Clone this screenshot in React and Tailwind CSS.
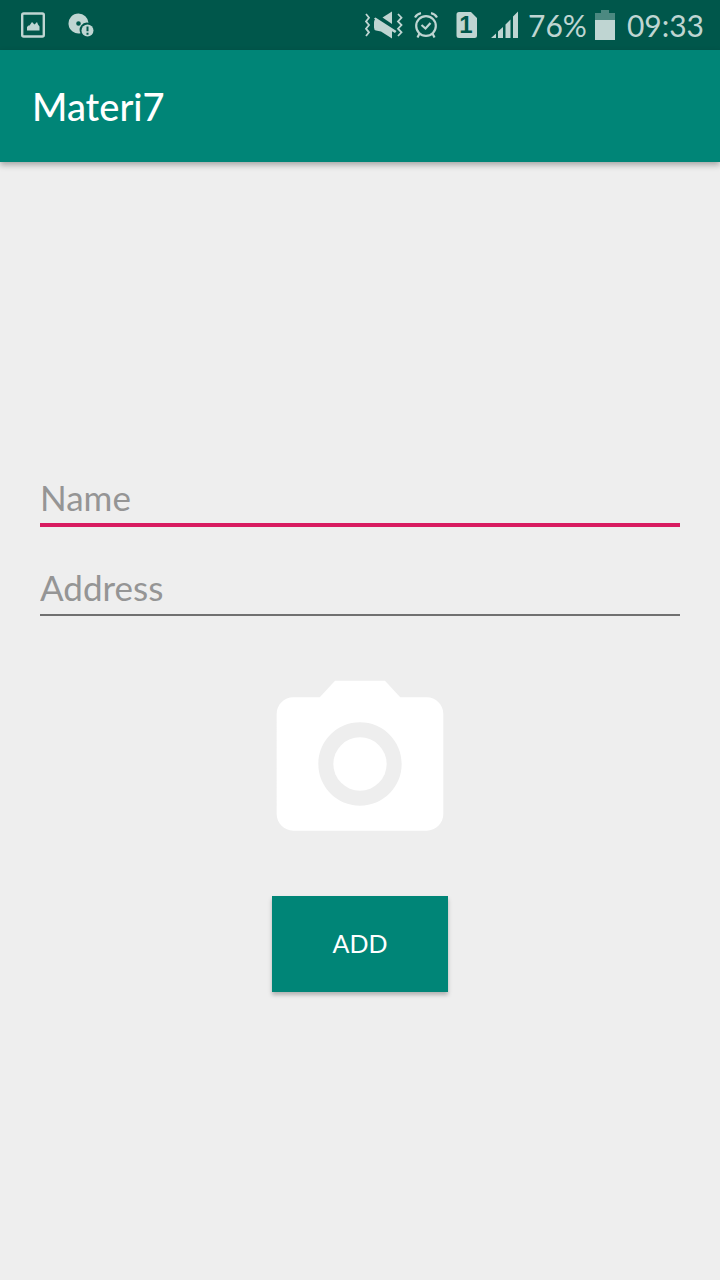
import React from 'react';

function PictureIcon() {
  return (
    <svg className="h-[26px] w-[26px]" viewBox="0 0 26 26" fill="none" aria-hidden="true">
      <rect x="2.200" y="1.500" width="21.600" height="23" rx="1.5" stroke="currentColor" strokeWidth="2.4" />
      <path d="M7 18.500V15l1.500-1.500h1L12 10l2.500 2.500L17 10l1 2.500 1.500 2v4z" fill="currentColor" />
    </svg>
  );
}

function DiscAlertIcon() {
  return (
    <svg className="h-6 w-7" viewBox="0 0 28 24" aria-hidden="true">
      <path
        fill="currentColor"
        fillRule="evenodd"
        d="M10.500 0.500a10 10 0 0 1 10 9.300a7.300 7.300 0 0 0-8 10.500a10 10 0 1 1-2-19.800zM10.500 8.200a2.300 2.300 0 1 0 0 4.600a2.300 2.300 0 0 0 0-4.600z"
      />
      <circle cx="19.5" cy="17.500" r="6" fill="currentColor" />
      <path d="M19.500 13.500v4.700M19.500 19.800v1.900" stroke="#00574b" strokeWidth="2" />
    </svg>
  );
}

function VibrateMuteIcon() {
  return (
    <svg className="h-7 w-10 overflow-visible" viewBox="0 0 40 28" aria-hidden="true">
      <path
        d="M4 3l3 3.700-3 3.700 3 3.600-3 3.700 3 3.600-3 3.700M36 3l3.500 3.700-3.500 3.700 3.500 3.600-3.500 3.700 3.500 3.600-3.500 3.700"
        fill="none"
        stroke="currentColor"
        strokeWidth="1.8"
      />
      <path d="M20.500 6.500L30 0.500v12.500z" fill="currentColor" />
      <path d="M13.500 6.500L34.500 20l-1.500 2-3-1.700V27.500L19 20.500l-5-1q-2-.5-2-3v-5q0-2 1-3l-1-1z" fill="currentColor" />
    </svg>
  );
}

function AlarmIcon() {
  return (
    <svg className="h-7 w-6" viewBox="0 0 24 28" fill="none" stroke="currentColor" aria-hidden="true">
      <circle cx="12" cy="15" r="9.800" strokeWidth="2.200" />
      <path d="M1 6.500Q3 3 7 2.200M23 6.500Q21 3 17 2.200M5.500 22.500L3.500 26.500M18.500 22.500l2 4" strokeWidth="2.200" />
      <path d="M7.500 14l4 3.500L16.500 12" strokeWidth="2.200" />
    </svg>
  );
}

function SimIcon() {
  return (
    <span className="grid">
      <svg className="col-start-1 row-start-1 h-7 w-6" viewBox="0 0 24 28" aria-hidden="true">
        <path d="M5 1h12l6 6v17.500a2.500 2.500 0 0 1-2.500 2.500h-15.500a2.500 2.500 0 0 1-2.500-2.500V3.500a2.500 2.500 0 0 1 2.500-2.500z" fill="currentColor" />
      </svg>
      <span className="col-start-1 row-start-1 text-center font-['Liberation_Sans',sans-serif] text-2xl leading-7 font-bold text-[#00574b]">1</span>
    </span>
  );
}

function SignalIcon() {
  return (
    <svg className="h-7 w-7" viewBox="0 0 28 28" fill="currentColor" aria-hidden="true">
      <path d="M1 27l5-4.500V27zM8 20.500l5-4.500v11H8zM15.500 13.500l5-5V27h-5zM23 5.500l5-5V27h-5z" />
    </svg>
  );
}

function BatteryIcon() {
  return (
    <svg className="h-8 w-5" viewBox="0 0 20 32" fill="currentColor" aria-hidden="true">
      <path d="M6 1h8v3h6v7H0V4h6z" opacity="0.4" />
      <path d="M0 11h20v20H0z" />
    </svg>
  );
}

function CameraIcon() {
  return (
    <svg className="h-50 w-50" viewBox="0 0 24 24" fill="#ffffff" aria-hidden="true">
      <circle cx="12" cy="12" r="3.200" />
      <path d="M9 2L7.170 4H4c-1.100 0-2 .9-2 2v12c0 1.100.9 2 2 2h16c1.100 0 2-.9 2-2V6c0-1.100-.9-2-2-2h-3.170L15 2H9zm3 15c-2.760 0-5-2.240-5-5s2.240-5 5-5 5 2.240 5 5-2.240 5-5 5z" />
    </svg>
  );
}

export default function App() {
  return (
    <div className="flex min-h-screen flex-col bg-[#eeeeee] font-['Lato',sans-serif]">
      <div className="flex h-[50px] items-center justify-between bg-[#00574b] pr-4 pl-5 text-[#bfd5d2]">
        <div className="flex items-center gap-[22px]">
          <PictureIcon />
          <DiscAlertIcon />
        </div>
        <div className="flex items-center text-3xl leading-8">
          <div className="flex items-center gap-3 pr-2.5">
            <VibrateMuteIcon />
            <AlarmIcon />
            <span className="pl-1"><SimIcon /></span>
            <SignalIcon />
          </div>
          <span className="pr-2">76%</span>
          <BatteryIcon />
          <span className="pl-3">09:33</span>
        </div>
      </div>

      <header className="flex h-28 items-center bg-[#008577] px-8 shadow-[0_3px_6px_rgba(0,0,0,0.3)]">
        <h1 className="text-[38px] leading-12 font-medium text-white">Materi7</h1>
      </header>

      <main className="flex flex-1 flex-col justify-center px-10">
        <form className="flex flex-col items-center" onSubmit={(e) => e.preventDefault()}>
          <input
            type="text"
            aria-label="Name"
            placeholder="Name"
            className="mt-5 h-[57px] w-full border-b-4 border-[#d81b60] bg-transparent text-[35px] placeholder:text-[#959595] outline-none"
          />
          <input
            type="text"
            aria-label="Address"
            placeholder="Address"
            className="mt-8 h-[57px] w-full border-b-2 border-[#707070] bg-transparent text-[35px] placeholder:text-[#959595] outline-none"
          />
          <button type="button" aria-label="Take photo" className="mt-12">
            <CameraIcon />
          </button>
          <button
            type="submit"
            className="mt-8 h-24 w-44 bg-[#008577] text-[25px] text-white shadow-[0_3px_4px_rgba(0,0,0,0.25)]"
          >
            ADD
          </button>
        </form>
      </main>
    </div>
  );
}
